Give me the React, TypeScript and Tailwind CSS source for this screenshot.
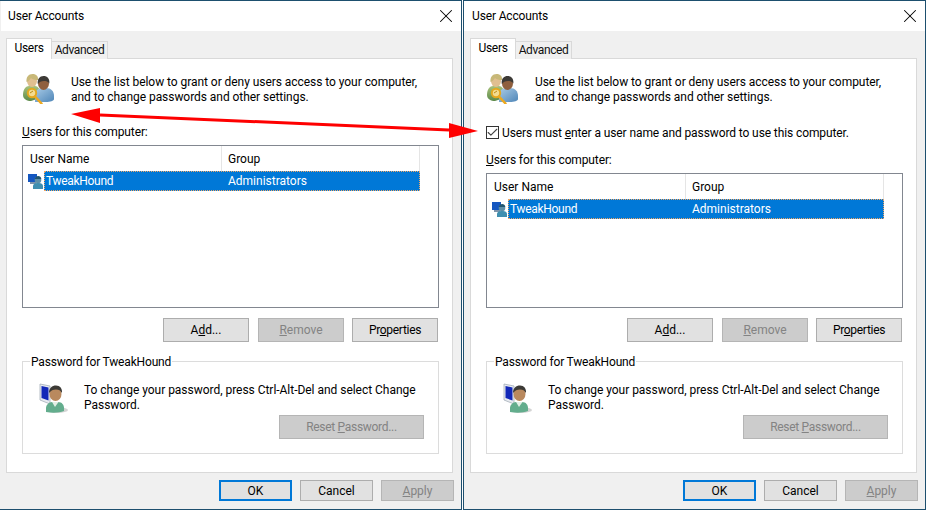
import type { ReactNode } from "react";
import { X, Check } from "lucide-react";

function UsersIcon() {
  return (
    <svg width="32" height="32" viewBox="-1 -1 32 32" className="shrink-0">
      <defs>
        <linearGradient id="shirtBlue" x1="0" y1="0" x2="1" y2="1">
          <stop offset="0" stopColor="#a9cbe6" />
          <stop offset="1" stopColor="#4f86b8" />
        </linearGradient>
        <linearGradient id="shirtGreen" x1="0" y1="0" x2="0" y2="1">
          <stop offset="0" stopColor="#a8c27c" />
          <stop offset="1" stopColor="#5d8a4a" />
        </linearGradient>
      </defs>
      <path d="M0 22c0-6 3-9 6-9h6c3 0 5 3 5 7v5l-9 3c-4 0-8-2-8-6z" fill="url(#shirtGreen)" />
      <ellipse cx="9" cy="8" rx="5" ry="6" fill="#e0bf90" />
      <path d="M3.500 9c-.5-5 2-8 6-8s6 2.500 5.500 6c-3 0-5.500-.5-7-2-1 1.500-2 3-4.500 4z" fill="#c8b878" />
      <path d="M12 29v-7c0-4 3-7 7-7h4c5 0 8 3 8 8v3c0 2-4 3-8 3z" fill="url(#shirtBlue)" />
      <ellipse cx="20.500" cy="10.500" rx="5.500" ry="6.500" fill="#8f5f3e" />
      <path d="M14.800 11c-.8-5 2-8 5.700-8s6.500 2.500 5.800 7.500c-1.500-2-3-2.500-5.300-2.500-2.800 0-4.700 1-6.200 3z" fill="#3d3a36" />
      <circle cx="9" cy="20" r="4.200" fill="#f4dc90" stroke="#e3a81f" strokeWidth="2" />
      <path d="M7 20l3-2" stroke="#b98a18" strokeWidth="1" />
      <path d="M12 23.500l6.500 7" stroke="#eda91f" strokeWidth="2.500" strokeLinecap="round" />
    </svg>
  );
}

function PasswordIcon() {
  return (
    <svg width="32" height="32" viewBox="0 0 32 32" className="shrink-0">
      <ellipse cx="20" cy="27" rx="11" ry="3" fill="#d4d4d4" />
      <path d="M3 1l10 2v18l-10-4z" fill="#e8ebf0" stroke="#a5aeb9" strokeWidth="0.800" />
      <path d="M4.500 3l7 1.500v13l-7-2.500z" fill="#1228b8" />
      <path d="M9 29v-4c0-3 3-6 6-6h6c4 0 6 3 6 6v3c-5 2-12 2-18 1z" fill="#63ad8d" />
      <path d="M15 19l3 5 3.500-5z" fill="#e2efe6" />
      <ellipse cx="18.500" cy="11" rx="6" ry="7" fill="#b9895e" />
      <path d="M12 10c0-5 3-7.500 7-7.500s6.500 3 6 7.500c-1.500-2.500-3-3.500-6-3.500-3 0-5 1-7 3.500z" fill="#3c3a36" />
    </svg>
  );
}

function ComputerUserIcon() {
  return (
    <svg width="16" height="16" viewBox="0 0 16 16" className="shrink-0">
      <path d="M0 1h9v8H0z" fill="#1557c0" />
      <path d="M2 9h6v2H2z" fill="#7f93aa" />
      <path d="M5 16v-3c0-2 2-3 4-3h2c2 0 4 1 4 3v3z" fill="#3f8fb0" />
      <circle cx="10" cy="7" r="3.300" fill="#5d8fa8" />
      <path d="M6.700 6c.5-2 2-3 3.500-3s3 1 3.100 3z" fill="#23566e" />
    </svg>
  );
}

function Btn({
  w,
  h = "h-6",
  disabled,
  primary,
  children,
}: {
  w: string;
  h?: string;
  disabled?: boolean;
  primary?: boolean;
  children: ReactNode;
}) {
  let tone = "border border-[#adadad] bg-[#e1e1e1] text-black";
  if (disabled) tone = "border border-[#b5b5b5] bg-[#cccccc] text-[#838383]";
  if (primary) tone = "border-2 border-[#0078d7] bg-[#e1e1e1] text-black";
  return (
    <div className={`${w} ${h} ${tone} flex shrink-0 items-center justify-center`}>
      <span>{children}</span>
    </div>
  );
}

function UserAccountsWindow({ withCheckbox }: { withCheckbox?: boolean }) {
  return (
    <div
      className={
        withCheckbox
          ? "flex h-[510px] w-[463px] shrink-0 flex-col border border-[#1d4f6e] bg-[#f0f0f0]"
          : "flex h-[510px] w-[462px] shrink-0 flex-col border border-l-0 border-[#1d4f6e] bg-[#f0f0f0] pl-px"
      }
    >
      {/* title bar */}
      <div
        className={`${withCheckbox ? "pl-[8px]" : "pl-[7px]"} flex h-[30px] shrink-0 items-center justify-between bg-white pr-[4px]`}
      >
        <span className="tracking-[-0.15px]">User Accounts</span>
        <X className="h-[22px] w-[22px] text-black" strokeWidth={1.1} />
      </div>

      {/* tabs */}
      <div className={`${withCheckbox ? "ml-[6px]" : "ml-[5px]"} relative z-10 mt-[7px] flex h-[21px] items-end`}>
        <div className="flex h-[21px] w-[46px] items-start justify-center border border-b-0 border-[#d9d9d9] bg-white tracking-[-0.3px]">
          Users
        </div>
        <div className="flex h-[18px] w-[56px] items-center justify-center border border-l-0 border-b-0 border-[#d9d9d9] bg-[#f0f0f0] pb-[2px] tracking-[-0.4px] text-[#111]">
          Advanced
        </div>
      </div>

      {/* tab panel */}
      <div
        className={`${withCheckbox ? "ml-[6px]" : "ml-[5px]"} mt-[-1px] flex h-[415px] w-[447px] flex-col border border-[#d9d9d9] bg-white pl-[15px] pr-[13px]`}
      >
        <div className="flex h-[59px] shrink-0 items-start pt-[13px]">
          <UsersIcon />
          <p className="ml-[17px] whitespace-nowrap pt-[3px] leading-[15px] tracking-[-0.05px]">
            Use the list below to grant or deny users access to your computer,
            <br />
            and to change passwords and other settings.
          </p>
        </div>

        {withCheckbox && (
          <div className="flex h-[28px] shrink-0 items-start pt-[8px]">
            <div className="flex h-[13px] w-[13px] items-center justify-center border border-[#333] bg-white">
              <Check className="h-[13px] w-[13px] shrink-0 text-[#444]" strokeWidth={2} />
            </div>
            <span className="ml-[3px] leading-[15px] tracking-[-0.1px]">
              Users must <span className="underline">e</span>nter a user name and password to use this computer.
            </span>
          </div>
        )}

        <div className="flex h-[27px] shrink-0 items-start pt-[7px] leading-[15px] tracking-[-0.12px]">
          <span>
            <span className="underline">U</span>sers for this computer:
          </span>
        </div>

        {/* list */}
        <div className={`${withCheckbox ? "h-[135px]" : "h-[163px]"} shrink-0 border border-[#828790] bg-white`}>
          <div className="flex h-[25px]">
            <div className="flex w-[199px] items-center border-r border-[#e5e5e5] pl-[7px]">User Name</div>
            <div className="flex w-[198px] items-center border-r border-[#e5e5e5] pl-[6px]">Group</div>
          </div>
          <div className="flex h-[20px] items-center pl-[5px]">
            <ComputerUserIcon />
            <div className="flex h-[20px] w-[376px] items-center border border-dotted border-[#f0a868] bg-[#0078d7] text-white">
              <span className="w-[177px] pl-px tracking-[-0.3px]">TweakHound</span>
              <span className="pl-[6px]">Administrators</span>
            </div>
          </div>
        </div>

        {/* list buttons */}
        <div className="mt-[10px] flex shrink-0 justify-end gap-[8px] pr-px">
          <div className="mr-px">
            <Btn w="w-[86px]">
              A<span className="underline">d</span>d...
            </Btn>
          </div>
          <Btn w="w-[86px]" disabled>
            <span className="underline">R</span>emove
          </Btn>
          <Btn w="w-[86px]">
            <span className="tracking-[-0.3px]">
              Pr<span className="underline">o</span>perties
            </span>
          </Btn>
        </div>

        {/* password group */}
        <div className="relative mt-[19px] h-[93px] shrink-0 border border-[#dcdcdc] pl-[14px]">
          <span className="absolute -top-[7px] left-[7px] bg-white px-px leading-[15px] tracking-[-0.17px]">
            Password for TweakHound
          </span>
          <div className="flex items-start pt-[21px]">
            <PasswordIcon />
            <p className="ml-[15px] whitespace-nowrap leading-[15px] tracking-[-0.03px]">
              To change your password, press Ctrl-Alt-Del and select Change
              <br />
              Password.
            </p>
          </div>
          <div className="absolute bottom-[14px] right-[14px]">
            <Btn w="w-[145px]" disabled>
              <span className="tracking-[-0.3px]">
                Reset <span className="underline">P</span>assword...
              </span>
            </Btn>
          </div>
        </div>
      </div>

      {/* dialog buttons */}
      <div className="mt-[7px] flex justify-end gap-[8px] pr-[7px]">
        <Btn w="w-[73px]" h="h-[21px]" primary>
          OK
        </Btn>
        <Btn w="w-[73px]" h="h-[21px]">
          Cancel
        </Btn>
        <Btn w="w-[73px]" h="h-[21px]" disabled>
          <span className="underline">A</span>pply
        </Btn>
      </div>
    </div>
  );
}

export default function App() {
  return (
    <div className="relative flex h-[510px] w-[926px] gap-px overflow-hidden bg-white font-['Roboto',sans-serif] text-[12px] text-black">
      <UserAccountsWindow />
      <UserAccountsWindow withCheckbox />
      {/* red annotation arrow over both dialogs */}
      <svg width="926" height="510" viewBox="0 0 926 510" className="pointer-events-none absolute left-0 top-0">
        <path d="M100 115L449 130" stroke="#fe0000" strokeWidth="3" />
        <path d="M71 114L100 108V123z" fill="#fe0000" />
        <path d="M478 131L449 123V138z" fill="#fe0000" />
      </svg>
    </div>
  );
}
